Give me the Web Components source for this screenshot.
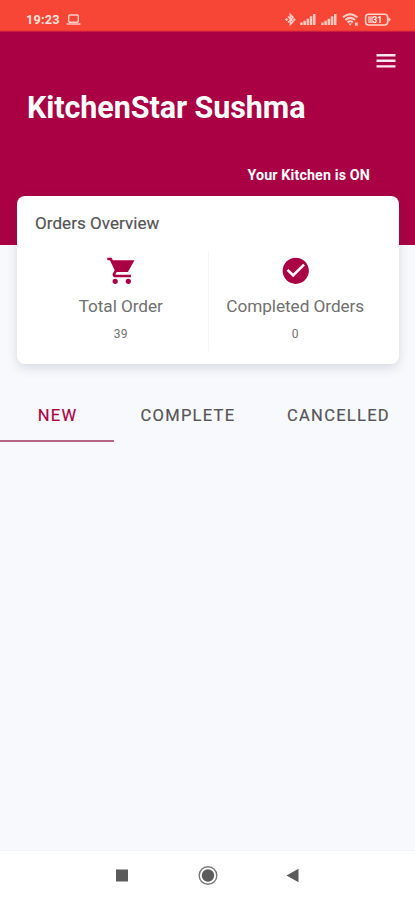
<!DOCTYPE html>
<html lang="en"><head><meta charset="utf-8"><title>KitchenStar</title>
<style>
html,body{margin:0;height:100%}
body{font-family:Roboto,"Liberation Sans",sans-serif;background:#f8f9fd;overflow:hidden}
</style></head><body>
<kitchen-app></kitchen-app>
<script>
const define=(name,html)=>customElements.define(name,class extends HTMLElement{
  constructor(){super();this.attachShadow({mode:'open'}).innerHTML=html;}
});

define('status-bar',`<style>
:host{display:flex;justify-content:space-between;align-items:flex-start;height:32px;box-sizing:border-box;background:linear-gradient(#f74536 0 30px,#e23139 31px,#b60543);color:#ffe3dc;padding:12px 24px 0 26px}
.left{display:flex;gap:6px;font:700 12.7px/15px Roboto,sans-serif;letter-spacing:.2px}
svg{display:block}
</style><div class="left"><span>19:23</span>
<svg width="15" height="15" viewBox="0 0 15 15" fill="none" stroke="#ffd0c7" stroke-width="1.4"><rect x="2.7" y="3" width="9.6" height="7.3" rx="1"/><path d="M.5 12h14"/></svg></div>
<svg width="107" height="16" viewBox="0 0 107 16" fill="#ffcabf">
<path d="M4 4.5 9 9.8 6.4 12.4V2.6L9 5.2 4 10.5" fill="none" stroke="#ffd0c7" stroke-width="1.6"/><path d="M2.6 5.9l1.7 1.7-1.7 1.7L.9 7.6zM10.2 5.9l1.7 1.7-1.7 1.7-1.7-1.7z"/>
<path d="M16.2 10.5h2.5V13h-2.5zM19.4 8.7h2.5V13h-2.5zM22.6 6.7h2.5V13h-2.5zM25.8 4.3h2.5V13h-2.5zM29 2h2.5v11H29z"/>
<path d="M37.2 10.5h2.5V13h-2.5zM40.4 8.7h2.5V13h-2.5zM43.6 6.7h2.5V13h-2.5zM46.8 4.3h2.5V13h-2.5zM50 2h2.5v11H50z"/>
<g fill="none" stroke="#ffd0c7" stroke-width="2"><path d="M59 5.3q7.2-6 14.4 0M61.3 7.9q4.9-4 9.8 0M63.5 10.4q2.7-2.2 5.4 0"/></g><path d="M66.2 13.7l-1.7-2.1h3.4zM70.9 10.4h2.8v3.3h-2.8z"/>
<rect x="81.6" y="2.2" width="22" height="10.8" rx="3" fill="none" stroke="#ffd7ce" stroke-width="1.5"/><path d="M104.4 5l2.6 2.6-2.6 2.6z"/><rect x="83.9" y="4.2" width="5" height="6.8" rx="1" fill="#ffa799"/><text x="88.3" y="10.8" font-family="Roboto,sans-serif" font-size="8.8" font-weight="700" fill="#fff0eb">31</text>
</svg>`);

define('kitchen-header',`<style>
:host{display:flex;flex-direction:column;height:213px;background:#aa0044;color:#fff}
.menu{align-self:flex-end;margin:22px 19px 0 0;display:block;width:20px;height:14px}
h1{margin:22px 0 0 27px;font-size:30.5px;line-height:36px;font-weight:700;white-space:nowrap;letter-spacing:-.08px}
p{align-self:flex-end;margin:40px 45px 0 0;font-size:14.3px;line-height:18px;font-weight:700;white-space:nowrap;letter-spacing:.12px}
</style><svg class="menu" viewBox="0 0 20 14" fill="#ffe9ef"><path d="M.5 0h19v2.4H.5zM.5 5.6h19V8H.5zM.5 11.2h19v2.4H.5z"/></svg><h1><slot name="title"></slot></h1><p><slot name="state"></slot></p>`);

define('order-stat',`<style>
:host{display:flex;flex-direction:column;align-items:center;color:#707070;flex:1}
::slotted(svg){display:block;width:31.5px;height:31.5px;fill:#aa0044}
.label{margin-top:8px;font-size:17.2px;line-height:22px;white-space:nowrap;letter-spacing:-.05px}
.num{margin-top:10px;font-size:12px;line-height:14px;letter-spacing:.3px}
</style><slot name="icon"></slot><div class="label"><slot name="label"></slot></div><div class="num"><slot></slot></div>`);

define('overview-card',`<style>
:host{display:block;box-sizing:border-box;position:relative;height:168px;margin:-49px 16px 0 17px;padding:17px 17px 0;background:#fff;border-radius:8px;box-shadow:0 4px 11px rgba(60,65,80,.16)}
h2{margin:0 0 0 1px;font-size:17px;line-height:20px;font-weight:400;color:#555;letter-spacing:.06px;-webkit-text-stroke:.2px #555}
.stats{display:flex;height:100px;margin-top:18px}
.stats::before{content:"";order:1;width:1px;background:#f5f5f7}
::slotted(order-stat){padding-top:4px}
::slotted(order-stat:last-of-type){order:2}
</style><h2>Orders Overview</h2><div class="stats"><slot></slot></div>`);

define('order-tabs',`<style>
:host{display:grid;grid-template-columns:114px 147px 154px;margin-top:26px;height:52px}
::slotted(span){display:flex;align-items:center;justify-content:center;padding-left:1px;font-size:16.5px;font-weight:400;letter-spacing:1.28px;color:#555558;-webkit-text-stroke:.2px;border-bottom:2.5px solid transparent;box-sizing:border-box}
::slotted(.on){color:#aa0044;border-color:#b66584}
</style><slot></slot>`);

define('nav-bar',`<style>
:host{display:flex;align-items:center;margin-top:auto;height:50px;background:#fff;border-top:1px solid #f3f4f6;box-sizing:border-box}
svg{display:block}
</style><svg width="415" height="49" viewBox="0 851 415 49" fill="#5b5b5b"><path d="M116 869.5h12v12h-12zM298.5 868.7v13.6L286.5 875.5z"/><circle cx="208" cy="875.5" r="6.2"/><circle cx="208" cy="875.5" r="8.8" fill="none" stroke="#777" stroke-width="1.4"/></svg>`);

define('kitchen-app',`<style>:host{display:flex;flex-direction:column;height:100vh}
.cart{transform:translateX(1px)}</style>
<status-bar></status-bar>
<kitchen-header><span slot="title">KitchenStar Sushma</span><span slot="state">Your Kitchen is ON</span></kitchen-header>
<overview-card>
<order-stat><svg class="cart" slot="icon" viewBox="0 0 24 24"><circle cx="7" cy="20" r="2"/><circle cx="17" cy="20" r="2"/><path d="M1 2v2h2l3.6 7.59-1.35 2.45c-.16.28-.25.61-.25.96 0 1.1.9 2 2 2h12v-2H7.42c-.14 0-.25-.11-.25-.25l.03-.12.9-1.63h8.6l5-9H5.21l-.94-2H1z"/></svg><span slot="label">Total Order</span>39</order-stat>
<order-stat><svg slot="icon" viewBox="0 0 24 24"><path d="M12 2C6.48 2 2 6.48 2 12s4.48 10 10 10 10-4.48 10-10S17.52 2 12 2zm-2 15-5-5 1.41-1.41L10 14.17l7.59-7.59L19 8l-9 9z"/></svg><span slot="label">Completed Orders</span>0</order-stat>
</overview-card>
<order-tabs><span class="on">NEW</span><span>COMPLETE</span><span>CANCELLED</span></order-tabs>
<nav-bar></nav-bar>`);
</script></body></html>
